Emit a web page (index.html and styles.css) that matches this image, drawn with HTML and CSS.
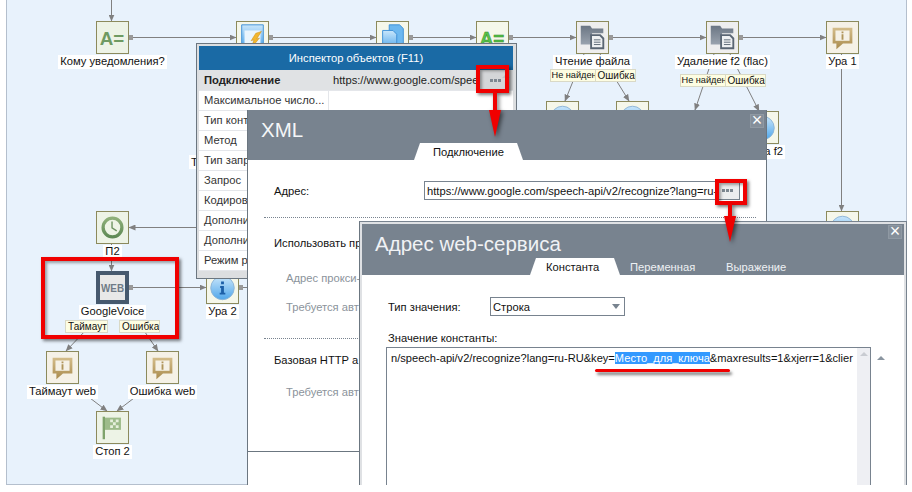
FILE: index.html
```html
<!DOCTYPE html>
<html lang="ru">
<head>
<meta charset="utf-8">
<title>Inspector</title>
<link rel="stylesheet" href="styles.css">
</head>
<body>
<svg class="defs" width="0" height="0" aria-hidden="true">
  <defs>
    <linearGradient id="gGreen" x1="0" y1="0" x2="0" y2="1"><stop offset="0" stop-color="#8fb07a"/><stop offset="1" stop-color="#5f8a55"/></linearGradient>
    <linearGradient id="gBlue" x1="0" y1="0" x2="0" y2="1"><stop offset="0" stop-color="#c9e6fb"/><stop offset="1" stop-color="#4fa6ea"/></linearGradient>
    <linearGradient id="gGold" x1="0" y1="0" x2="0" y2="1"><stop offset="0" stop-color="#d4bd8a"/><stop offset="1" stop-color="#a98b4e"/></linearGradient>
    <linearGradient id="gFolder" x1="0" y1="0" x2="0" y2="1"><stop offset="0" stop-color="#6b7684"/><stop offset="1" stop-color="#9aa3ae"/></linearGradient>
    <symbol id="i-bubble" viewBox="0 0 33 33">
      <path d="M6 6h21v17h-10l-7 6v-6h-4z" fill="url(#gGold)"/>
      <path d="M9 9h15v11h-15z" fill="#f5f1e6"/>
      <path d="M15.500 10h2v2h-2zM15.500 13h2v6h-2z" fill="#b0955a"/>
    </symbol>
    <symbol id="i-folder" viewBox="0 0 33 33">
      <path d="M4 4h10l2 3h12v5h-12v12h-12z" fill="url(#gFolder)"/>
      <path d="M14 13h11l4 4v12h-15z" fill="#5a6674"/>
      <path d="M16 15h8l3 3v9h-11z" fill="#eef0f2"/>
      <path d="M18 19h7M18 21.500h7M18 24h7" stroke="#5a6674" stroke-width="1"/>
    </symbol>
    <symbol id="i-info" viewBox="0 0 33 33">
      <circle cx="16.500" cy="17" r="12.500" fill="url(#gBlue)" stroke="#8db4d6"/>
      <path d="M15 10h3v3h-3zM14 15h4v7h1.500v2h-6v-2h1.500v-5h-1z" fill="#1c5fa8"/>
    </symbol>
  </defs>
</svg>

<main class="stage">
  <section class="canvas">
    <svg class="links" width="900" height="484" viewBox="6 0 900 484" aria-hidden="true">
      <defs>
        <marker id="arr" markerWidth="7" markerHeight="6" refX="6.500" refY="3" orient="auto" markerUnits="userSpaceOnUse"><path d="M0 0L7 3L0 6z" fill="#808080"/></marker>
      </defs>
      <g class="ln">
        <path marker-end="url(#arr)" d="M111.500 0V21"/>
        <path marker-end="url(#arr)" d="M129 37.500H236"/>
        <path marker-end="url(#arr)" d="M269 37.500H376"/>
        <path marker-end="url(#arr)" d="M409 37.500H476"/>
        <path marker-end="url(#arr)" d="M509 37.500H576"/>
        <path marker-end="url(#arr)" d="M609 37.500H706"/>
        <path marker-end="url(#arr)" d="M739 37.500H826"/>
        <path marker-end="url(#arr)" d="M841.500 54V211"/>
        <path marker-end="url(#arr)" d="M584 54L565 101"/>
        <path marker-end="url(#arr)" d="M600 54L629 101"/>
        <path marker-end="url(#arr)" d="M714 54L695 110"/>
        <path marker-end="url(#arr)" d="M730 54L759 111"/>
        <path marker-end="url(#arr)" d="M200 227.500H129"/>
        <path marker-end="url(#arr)" d="M111.500 244V271"/>
        <path marker-end="url(#arr)" d="M129 287.500H206"/>
        <path d="M239 287.500H250"/>
        <path marker-end="url(#arr)" d="M86 330L66 351"/>
        <path marker-end="url(#arr)" d="M138 322L158 351"/>
        <path marker-end="url(#arr)" d="M86 395L107 411"/>
        <path marker-end="url(#arr)" d="M138 395L117 411"/>
      </g>
      <g class="ports">
        <rect x="129" y="35" width="4" height="5"/><rect x="269" y="35" width="4" height="5"/>
        <rect x="409" y="35" width="4" height="5"/><rect x="509" y="35" width="4" height="5"/>
        <rect x="609" y="35" width="4" height="5"/><rect x="739" y="35" width="4" height="5"/>
        <rect x="129" y="285" width="4" height="5"/><rect x="239" y="285" width="4" height="5"/>
      </g>
    </svg>

    <div class="node green n1"><svg class="ico" viewBox="0 0 33 33"><text x="16" y="24" class="aeq">A=</text></svg><span class="lbl">Кому уведомления?</span></div>
    <div class="node pale n2"><svg class="ico" viewBox="0 0 33 33"><path d="M5 3h23v24h-23z" fill="url(#gBlue)" stroke="#3c8fd6"/><path d="M8 9h17v15h-17z" fill="#eaf5fd"/><path d="M20 12l6-2-5 8 3-1-9 11 3-9-3 1z" fill="#f2b62e" stroke="#c98a14" stroke-width=".5"/></svg></div>
    <div class="node pale n3"><svg class="ico" viewBox="0 0 33 33"><path d="M13 3h11l4 4v16h-15z" fill="#6cb8f0" stroke="#3c8fd6"/><path d="M6 9h11l4 4v16h-15z" fill="url(#gBlue)" stroke="#3c8fd6"/></svg></div>
    <div class="node pale n4"><svg class="ico" viewBox="0 0 33 33"><text x="16" y="24" class="aeq bright">A=</text></svg></div>
    <div class="node grey n5"><svg class="ico" viewBox="0 0 33 33"><use href="#i-folder"/></svg><span class="lbl">Чтение файла</span>
      <div class="badges b-low"><span class="badge bw1">Не найден</span><span class="badge bw2">Ошибка</span></div></div>
    <div class="node grey n6"><svg class="ico" viewBox="0 0 33 33"><use href="#i-folder"/></svg><span class="lbl">Удаление f2 (flac)</span>
      <div class="badges b-high"><span class="badge bw1">Не найден</span><span class="badge bw2">Ошибка</span></div></div>
    <div class="node cream n7"><svg class="ico" viewBox="0 0 33 33"><use href="#i-bubble"/></svg><span class="lbl">Ура 1</span></div>
    <div class="node pale n8"><svg class="ico" viewBox="0 0 33 33"><use href="#i-info"/></svg></div>
    <div class="node pale n9"><svg class="ico" viewBox="0 0 33 33"><use href="#i-info"/></svg></div>
    <div class="node pale n10"><svg class="ico" viewBox="0 0 33 33"><use href="#i-info"/></svg><span class="lbl lbl-f2">ка f2</span></div>
    <div class="node pale n11"><svg class="ico" viewBox="0 0 33 33"><use href="#i-info"/></svg></div>
    <div class="node green n12"><svg class="ico" viewBox="0 0 33 33"><circle cx="16.500" cy="16.500" r="10" fill="#eef4e6" stroke="url(#gGreen)" stroke-width="3.500"/><path d="M16 10v7l5 3" fill="none" stroke="#6f9462" stroke-width="1.500"/></svg><span class="lbl">П2</span></div>
    <div class="node web n13"><svg class="ico" viewBox="0 0 25 25"><text class="webt" transform="translate(12.500 17) scale(.86 1)">WEB</text></svg><span class="lbl">GoogleVoice</span>
      <div class="badges b-web"><span class="badge bw3">Таймаут</span><span class="badge bw4">Ошибка</span></div></div>
    <div class="node pale n14"><svg class="ico" viewBox="0 0 33 33"><use href="#i-info"/></svg><span class="lbl">Ура 2</span></div>
    <div class="node cream n15"><svg class="ico" viewBox="0 0 33 33"><use href="#i-bubble"/></svg><span class="lbl">Таймаут web</span></div>
    <div class="node cream n16"><svg class="ico" viewBox="0 0 33 33"><use href="#i-bubble"/></svg><span class="lbl">Ошибка web</span></div>
    <div class="node green n17"><svg class="ico" viewBox="0 0 33 33"><path d="M6 5h2.500v24H6z" fill="#7fa36c"/><path d="M8.500 6h17v13h-17z" fill="#9dbb8a"/><path d="M14 8h3v3h-3zM20 8h3v3h-3zM17 11h3v3h-3zM14 14h3v3h-3zM20 14h3v3h-3z" fill="#e6efdc"/></svg><span class="lbl">Стоп 2</span></div>

    <div class="redbox rb-web"></div>
    <span class="stray">Т</span>
  </section>

  <section class="inspector">
    <header class="insp-title">Инспектор объектов (F11)</header>
    <div class="row sel"><span class="k">Подключение</span><span class="v">https://www.google.com/spee</span><span class="dots-cell"><i class="dots"></i><i class="up"></i></span></div>
    <div class="row"><span class="k">Максимальное число...</span><span class="v"></span></div>
    <div class="row"><span class="k">Тип конт</span><span class="v"></span></div>
    <div class="row"><span class="k">Метод</span><span class="v"></span></div>
    <div class="row"><span class="k">Тип запр</span><span class="v"></span></div>
    <div class="row"><span class="k">Запрос</span><span class="v"></span></div>
    <div class="row"><span class="k">Кодиров</span><span class="v"></span></div>
    <div class="row"><span class="k">Дополни</span><span class="v"></span></div>
    <div class="row"><span class="k">Дополни</span><span class="v"></span></div>
    <div class="row"><span class="k">Режим р</span><span class="v"></span></div>
  </section>

  <section class="win-xml">
    <header class="xml-head">
      <h2 class="xml-title">XML</h2>
      <span class="close close-xml">×</span>
      <div class="tabs tabs-xml"><span class="tab active">Подключение</span></div>
    </header>
    <div class="xml-body">
      <div class="field"><label>Адрес:</label>
        <div class="input"><span class="input-text">https://www.google.com/speech-api/v2/recognize?lang=ru-</span><span class="btn3"><i class="dots"></i></span></div>
      </div>
      <hr class="dot">
      <p class="opt first">Использовать пр</p>
      <p class="sub s1">Адрес прокси-</p>
      <p class="sub s2">Требуется авт</p>
      <hr class="dot d2">
      <p class="opt">Базовая HTTP а</p>
      <p class="sub s3">Требуется авт</p>
      <div class="xml-foot"></div>
    </div>
  </section>

  <section class="win-addr">
    <header class="addr-head">
      <h2 class="addr-title">Адрес web-сервиса</h2>
      <span class="close close-addr">×</span>
      <div class="tabs tabs-addr"><span class="tab active">Константа</span><span class="tab">Переменная</span><span class="tab">Выражение</span></div>
    </header>
    <div class="addr-body">
      <div class="type-row"><label>Тип значения:</label><div class="select"><span>Строка</span><i class="caret"></i></div></div>
      <label class="val-label">Значение константы:</label>
      <div class="val-wrap">
        <div class="val-box">
          <div class="val-text">n/speech-api/v2/recognize?lang=ru-RU&amp;key=<mark class="hl">Место_для_ключа</mark>&amp;maxresults=1&amp;xjerr=1&amp;clier</div>
          <div class="vscroll"><i class="up pale-up"></i></div>
        </div>
        <i class="up outer-up"></i>
      </div>
    </div>
  </section>

  <div class="redbox rb-1"></div>
  <div class="redbox rb-2"></div>
  <div class="underline"></div>
  <svg class="arrow a1" width="12" height="45" viewBox="0 0 12 45" aria-hidden="true"><path d="M4 0h4v18h4L6 45 0 18h4z" fill="#f00000"/></svg>
  <svg class="arrow a2" width="12" height="38" viewBox="0 0 12 38" aria-hidden="true"><path d="M4 0h4v12h4L6 38 0 12h4z" fill="#f00000"/></svg>
</main>
</body>
</html>
```

FILE: styles.css
```css
* { box-sizing: border-box; }
html, body { margin: 0; padding: 0; background: #fff; }
body { width: 912px; height: 492px; overflow: hidden; font: 11.200px/14px "Liberation Sans", Arial, sans-serif; color: #111; }
.defs { position: absolute; }
.stage { position: relative; width: 912px; height: 485px; overflow: hidden; }

.canvas { position: absolute; left: 6px; top: 0; width: 901px; height: 485px; background: #e8f2fc; border: 1px solid #b4bfcd; border-top: 0; }
.links { position: absolute; left: -1px; top: 0; }
.ln path { fill: none; stroke: #808080; stroke-width: 1; }
.ports rect { fill: #999; }

.node { position: absolute; width: 33px; height: 33px; display: flex; flex-direction: column; align-items: center; }
.ico { flex: none; width: 33px; height: 33px; border: 1px solid #8c8a5c; display: block; }
.green .ico { background: #edf3e6; }
.pale .ico { background: #f5f7ea; }
.grey .ico { background: #eeeeee; }
.cream .ico { background: #f5f1e6; }
.web .ico { background: #e8e8e8; border: 4px solid #46596e; }
.lbl { flex: none; background: #fff; padding: 0 2px; margin-top: 1px; height: 14px; line-height: 13px; white-space: nowrap; color: #111; }
.lbl-f2 { align-self: flex-end; margin-right: -6px; }
.aeq { font: bold 20px "Liberation Sans", sans-serif; fill: #6f9a62; text-anchor: middle; }
.aeq.bright { fill: #58c24a; stroke: #2e8a28; stroke-width: .5; }
.webt { font: bold 11.500px "Liberation Sans", sans-serif; fill: #6f7a86; text-anchor: middle; }

.n1 { left: 89px; top: 21px; } .n2 { left: 229px; top: 21px; } .n3 { left: 369px; top: 21px; }
.n4 { left: 469px; top: 21px; } .n5 { left: 569px; top: 21px; } .n6 { left: 699px; top: 21px; }
.n7 { left: 819px; top: 21px; } .n8 { left: 539px; top: 101px; } .n9 { left: 609px; top: 101px; }
.n10 { left: 739px; top: 111px; } .n11 { left: 819px; top: 211px; } .n12 { left: 89px; top: 211px; }
.n13 { left: 89px; top: 271px; } .n14 { left: 199px; top: 271px; } .n15 { left: 39px; top: 351px; }
.n16 { left: 139px; top: 351px; } .n17 { left: 89px; top: 411px; }

.badges { display: flex; flex: none; }
.badge { height: 13px; background: #fdfde2; border: 1px solid #d9d9c6; font-size: 10px; line-height: 11px; padding-left: 2px; overflow: hidden; white-space: nowrap; flex: none; }
.b-low { margin-top: 0; }
.b-high { margin-top: 5px; }
.b-web { margin-top: 1px; gap: 11px; }
.bw1 { width: 46px; font-size: 9.200px; padding-left: 1px; } .bw2 { width: 41px; margin-left: -1px; } .bw3 { width: 43px; } .bw4 { width: 41px; }

.stray { position: absolute; left: 182px; top: 155px; background: #fff; padding-left: 2px; width: 9px; height: 14px; }

.redbox { position: absolute; border: 4px solid #f00000; box-shadow: 2px 2px 3px rgba(0,0,0,.5), inset 2px 2px 3px rgba(0,0,0,.35); }
.rb-web { left: 34px; top: 257px; width: 138px; height: 82px; }
.rb-1 { left: 476px; top: 65px; width: 33px; height: 28px; }
.rb-2 { left: 715px; top: 179px; width: 32px; height: 26px; }
.arrow { position: absolute; filter: drop-shadow(2px 2px 2px rgba(0,0,0,.55)); }
.a1 { left: 489px; top: 92px; }
.a2 { left: 724px; top: 204px; }
.underline { position: absolute; left: 595px; top: 369px; width: 135px; height: 3px; background: #f00000; border-radius: 2px; box-shadow: 2px 3px 3px rgba(0,0,0,.5); }

/* inspector */
.inspector { position: absolute; left: 196px; top: 43px; width: 321px; height: 236px; background: #dcdee0; border: 1px solid #6b7680; padding: 2px 3px 8px 2px; }
.insp-title { height: 24px; background: #1a6aa5; color: #fff; text-align: center; line-height: 24px; }
.row { display: flex; height: 20px; background: #fff; border-bottom: 1px solid #e4e6ea; line-height: 19px; }
.row.sel { height: 21px; background: #e0e2e4; line-height: 21px; position: relative; }
.row .k { width: 130px; flex: none; padding-left: 5px; overflow: hidden; white-space: nowrap; color: #333; border-right: 1px solid #e4e6ea; }
.row.sel .k { font-weight: bold; color: #222; border-right: 0; }
.row .v { flex: 1; padding-left: 4px; overflow: hidden; white-space: nowrap; color: #222; }
.dots-cell { width: 35px; flex: none; background: #d4d6d8; position: relative; display: flex; align-items: center; justify-content: center; }
.dots { display: block; width: 11px; height: 3px; background: repeating-linear-gradient(90deg, #7d8791 0 3px, transparent 3px 4px); }
.up { display: block; width: 0; height: 0; border-left: 4px solid transparent; border-right: 4px solid transparent; border-bottom: 4px solid #8a95a0; }
.dots-cell .up { position: absolute; right: 3px; top: 4px; border-bottom-color: #c2c6ca; }

/* XML window */
.win-xml { position: absolute; left: 247px; top: 110px; width: 520px; height: 380px; background: #fff; border-left: 1px solid #6b7680; border-right: 1px solid #6b7680; }
.xml-head { height: 50px; background: #78838f; position: relative; }
.xml-title { margin: 0; padding: 7px 0 0 13px; font: normal 20.500px/26px "Liberation Sans", sans-serif; color: #f4f6f8; }
.close { position: absolute; width: 14px; height: 14px; background: #858f9a; color: #fff; font: 18px/13px "Liberation Sans", sans-serif; text-align: center; box-shadow: inset 0 0 0 1px #8f99a3; }
.close-xml { right: 2px; top: 4px; }
.close-addr { right: 2px; top: 1px; }
.tabs { position: absolute; display: flex; bottom: 0; }
.tabs-xml { left: 166px; }
.tab { color: #eef1f4; height: 17px; line-height: 18px; white-space: nowrap; }
.tab.active { background: #fff; color: #111; clip-path: polygon(6px 0, calc(100% - 6px) 0, 100% 100%, 0 100%); }
.tabs-xml .tab { width: 109px; text-align: center; }
.xml-body { padding: 22px 19px 0 26px; display: flex; flex-direction: column; height: 330px; }
.field { display: flex; align-items: center; height: 19px; margin-top: -1px; }
.field label { width: 150px; flex: none; }
.input { width: 316px; height: 19px; border: 1px solid #78838f; display: flex; align-items: center; flex: none; }
.input-text { width: 291px; flex: none; padding-left: 2px; overflow: hidden; white-space: nowrap; }
.btn3 { flex: 1; height: 17px; background: #ecedef; display: flex; align-items: center; justify-content: center; }
hr.dot { border: 0; border-top: 1px dotted #78838f; margin: 17px -9px 0 -10px; height: 0; flex: none; }
hr.d2 { margin-top: 24px; }
.opt { margin: 0; white-space: nowrap; }
.opt.first { margin-top: 18px; }
.sub { margin: 0 0 0 12px; color: #8b939b; white-space: nowrap; }
.s1 { margin-top: 21px; } .s2 { margin-top: 15px; }
.s3 { margin-top: 18px; }
hr.d2 + .opt { margin-top: 14px; }
.xml-foot { position: absolute; left: 0; right: 0; top: 341px; border-top: 1px solid #6b7680; }

/* Address window */
.win-addr { position: absolute; left: 359px; top: 221px; width: 548px; height: 270px; background: #fff; border: 1px solid #78838f; border-left-color: #6b7680; padding: 2px 2px 0 2px; box-shadow: inset 0 0 0 2px #dfe1e4; }
.addr-head { height: 51px; background: #78838f; position: relative; margin-top: 0; }
.addr-title { margin: 0; padding: 7px 0 0 13px; font: normal 20.500px/26px "Liberation Sans", sans-serif; color: #f0f2f5; }
.tabs-addr { left: 168px; }
.tabs-addr .tab:nth-child(1) { width: 90px; padding-left: 16px; margin-right: 10px; }
.tabs-addr .tab:nth-child(2) { width: 96px; }
.addr-body { padding: 22px 35px 0 26px; display: flex; flex-direction: column; }
.type-row { display: flex; align-items: center; height: 19px; }
.type-row label { width: 102px; flex: none; }
.select { width: 135px; height: 19px; border: 1px solid #78838f; display: flex; align-items: center; justify-content: space-between; padding: 0 3px 0 2px; }
.caret { width: 0; height: 0; border-left: 4.500px solid transparent; border-right: 4.500px solid transparent; border-top: 5px solid #78838f; margin-right: 1px; }
.val-label { margin-top: 15px; line-height: 14px; }
.val-wrap { display: flex; margin-top: 2px; position: relative; margin-left: -2px; }
.val-box { width: 485px; height: 140px; border: 1px solid #78838f; border-bottom: 0; display: flex; flex: none; }
.val-text { width: 470px; flex: none; padding: 2px 0 0 4px; font-size: 11.100px; line-height: 16px; white-space: nowrap; overflow: hidden; }
.hl { background: #3399ff; color: #fff; }
.vscroll { flex: 1; background: #eeeff3; display: flex; justify-content: center; padding-top: 4px; }
.pale-up { border-bottom-color: #c9ccd2; }
.outer-up { position: absolute; left: 491px; top: 9px; }
```
